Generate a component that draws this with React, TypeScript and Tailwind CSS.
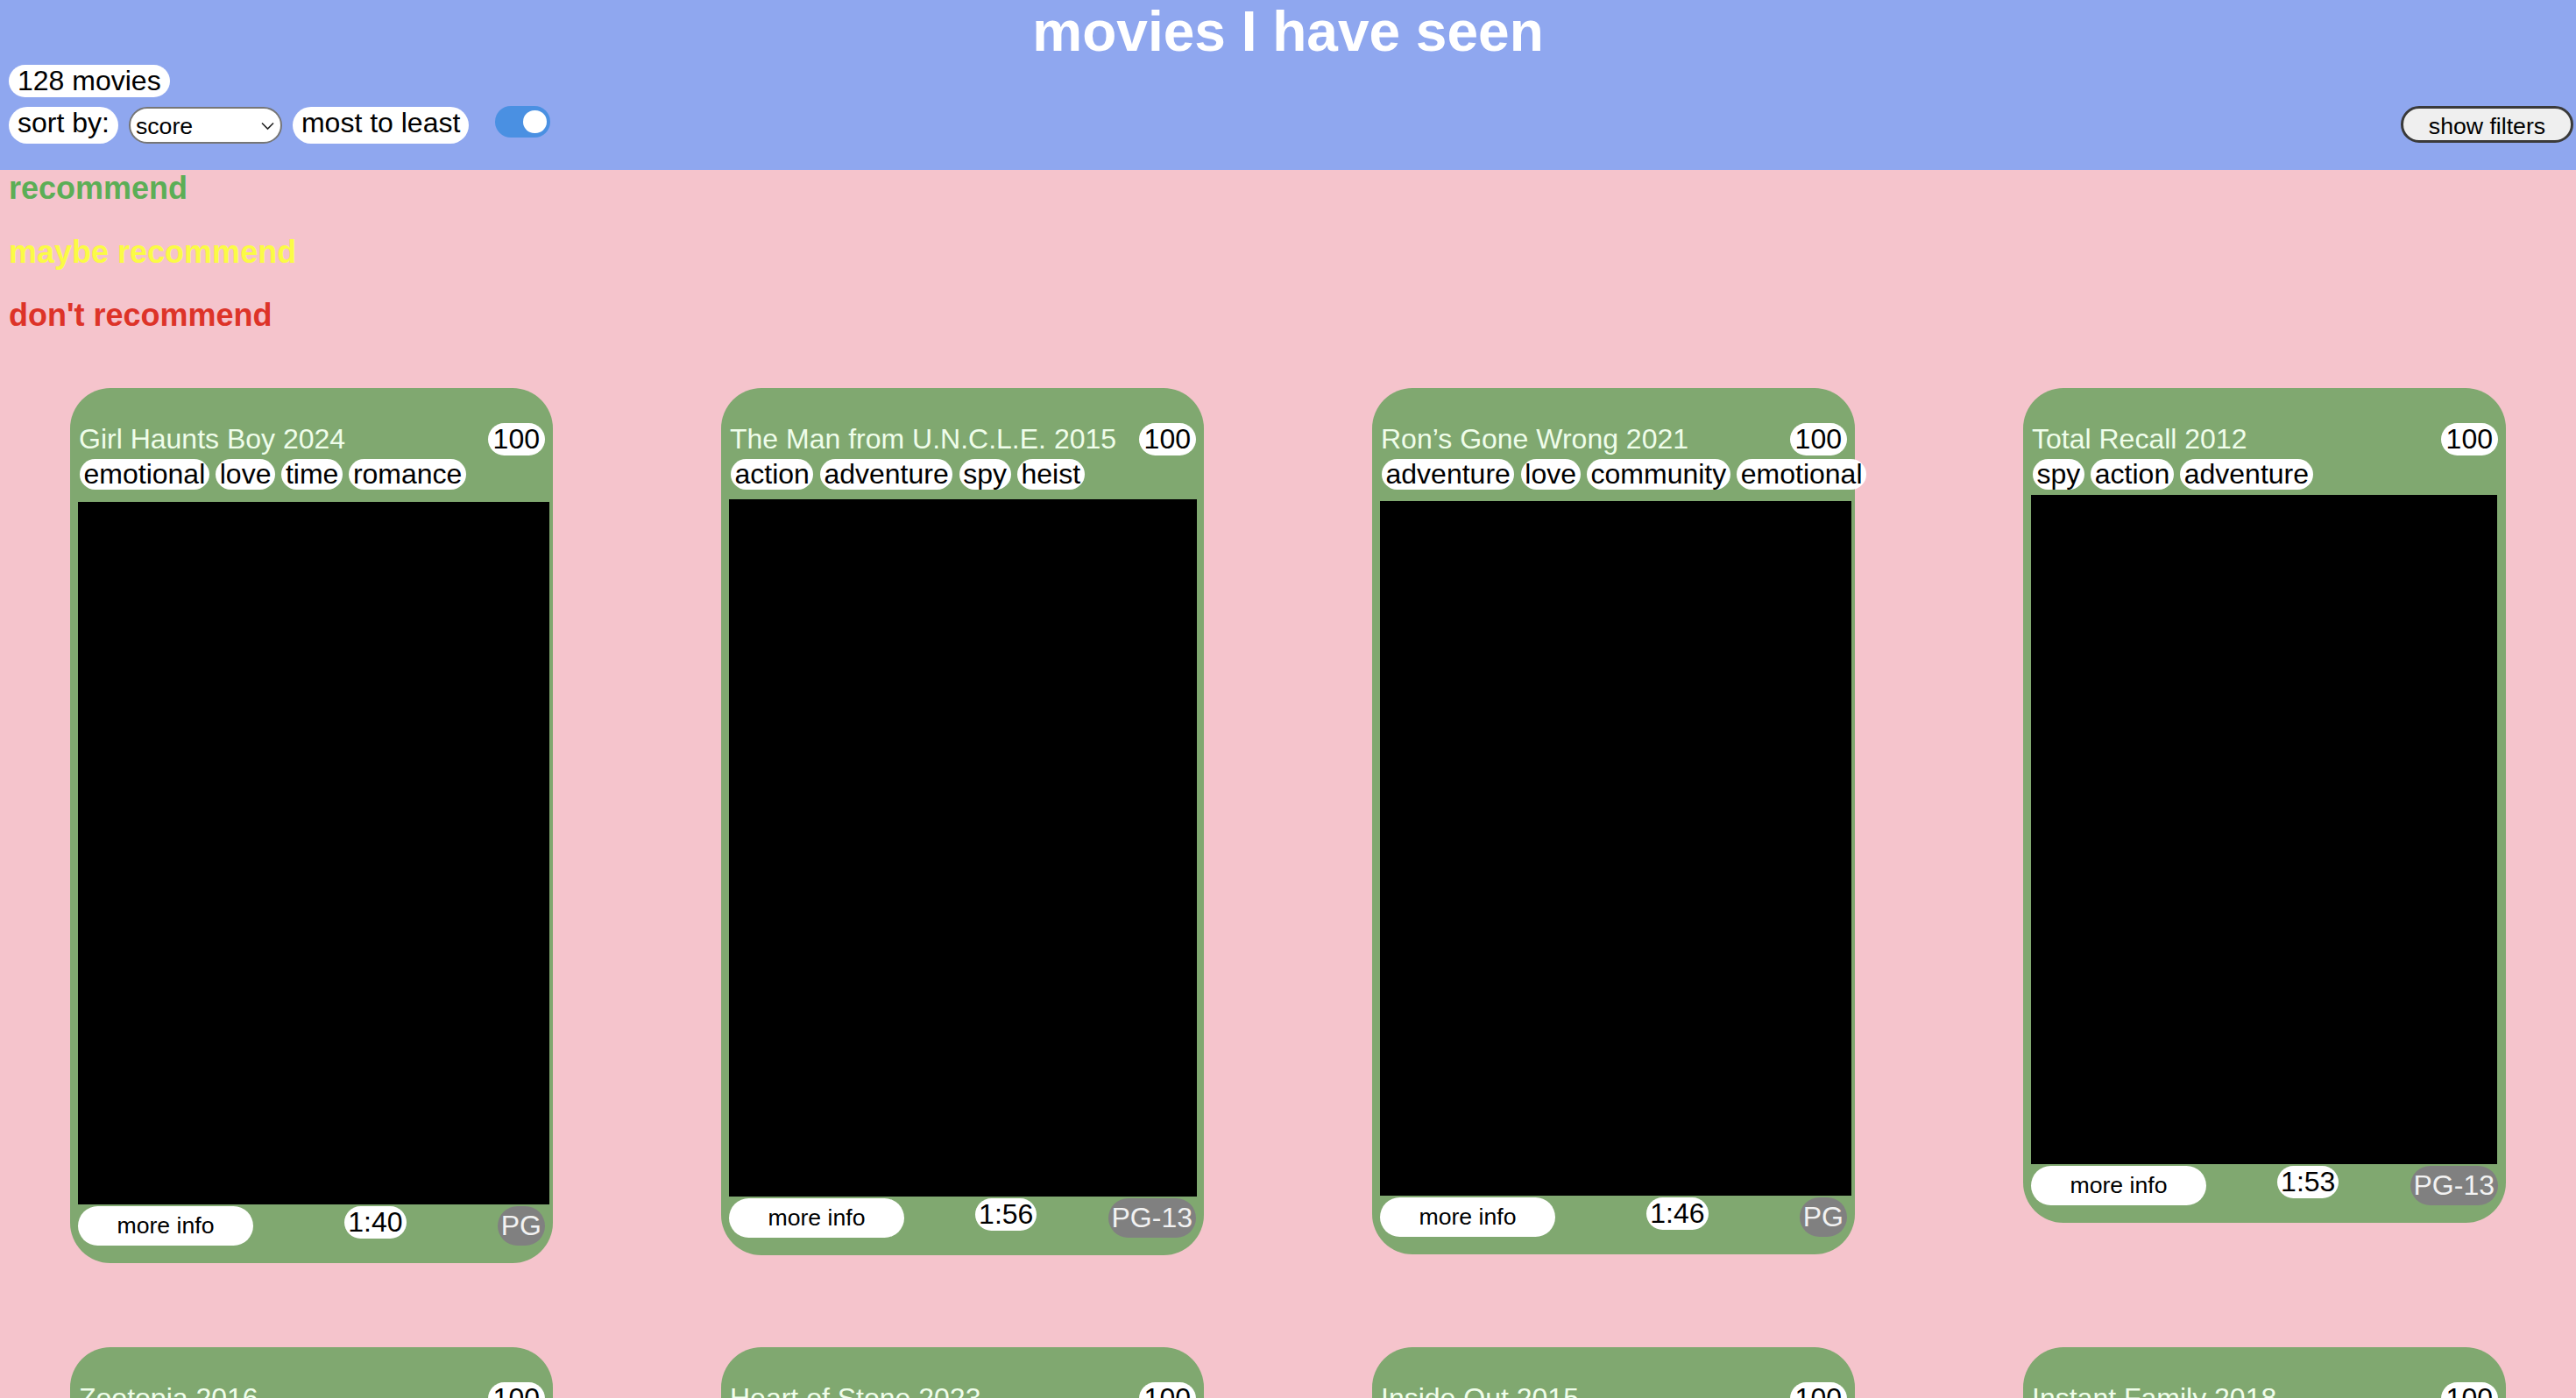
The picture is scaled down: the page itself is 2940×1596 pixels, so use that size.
import React from "react";

type Movie = {
  title: string;
  score: number;
  tags: string[];
  length: string;
  rating: string;
  poster: { w: number; h: number; top: number };
};

const movies: Movie[] = [
  { title: "Girl Haunts Boy 2024", score: 100, tags: ["emotional", "love", "time", "romance"], length: "1:40", rating: "PG", poster: { w: 538, h: 802, top: 14 } },
  { title: "The Man from U.N.C.L.E. 2015", score: 100, tags: ["action", "adventure", "spy", "heist"], length: "1:56", rating: "PG-13", poster: { w: 534, h: 796, top: 11 } },
  { title: "Ron\u2019s Gone Wrong 2021", score: 100, tags: ["adventure", "love", "community", "emotional"], length: "1:46", rating: "PG", poster: { w: 538, h: 793, top: 13 } },
  { title: "Total Recall 2012", score: 100, tags: ["spy", "action", "adventure"], length: "1:53", rating: "PG-13", poster: { w: 532, h: 764, top: 6 } },
  { title: "Zootopia 2016", score: 100, tags: ["animals", "mystery", "comedy"], length: "1:48", rating: "PG", poster: { w: 538, h: 800, top: 13 } },
  { title: "Heart of Stone 2023", score: 100, tags: ["action", "spy", "heist"], length: "2:05", rating: "PG-13", poster: { w: 536, h: 800, top: 13 } },
  { title: "Inside Out 2015", score: 100, tags: ["emotional", "family", "growing"], length: "1:35", rating: "PG", poster: { w: 538, h: 800, top: 13 } },
  { title: "Instant Family 2018", score: 100, tags: ["family", "comedy", "emotional"], length: "1:58", rating: "PG-13", poster: { w: 534, h: 800, top: 13 } },
];

function MovieCard({ movie }: { movie: Movie }) {
  return (
    <div className="w-[551px] rounded-[46px] bg-[#80a870] pt-[40px] pr-[9px] pb-[20px] pl-[9px]">
      <div className="flex items-start justify-between">
        <span className="pl-[1px] text-[32px] leading-[37px] text-[#effdea]">{movie.title}</span>
        <span className="rounded-full bg-white px-[6px] text-[32px] leading-[37px] text-black">{movie.score}</span>
      </div>
      <div className="mt-[4px] flex gap-[7.5px] whitespace-nowrap pl-[2px]">
        {movie.tags.map((tag) => (
          <span key={tag} className="rounded-full bg-white px-[4.5px] text-[32px] leading-[35px] text-black">
            {tag}
          </span>
        ))}
      </div>
      <div
        className="bg-black"
        style={{ width: movie.poster.w, height: movie.poster.h, marginTop: movie.poster.top }}
      />
      <div className="mt-[2px] flex items-start justify-between">
        <button className="h-[45px] w-[200px] rounded-full bg-white text-[26.67px] text-black">more info</button>
        <span className="rounded-full bg-white px-[4px] text-[32px] leading-[37px] text-black">{movie.length}</span>
        <span className="rounded-full bg-[#808080] px-[4px] text-[32px] leading-[45px] text-[#f2f2f2]">{movie.rating}</span>
      </div>
    </div>
  );
}

export default function App() {
  return (
    <div className="min-h-screen bg-[#f5c4cc] font-['Liberation_Sans',Arial,sans-serif]">
      <header className="bg-[#8fa7ef] pb-[30px]">
        <h1 className="text-center text-[64px] font-bold leading-[73px] text-white">movies I have seen</h1>
        <div className="mt-[1px] pl-[10px]">
          <span className="inline-block rounded-full bg-white px-[10px] text-[32px] leading-[37px] text-black">128 movies</span>
        </div>
        <div className="mt-[11px] flex items-start justify-between pr-[3px] pl-[10px]">
          <div className="flex items-start gap-[12px]">
            <span className="h-[42px] rounded-full bg-white px-[10px] pb-[5px] text-[32px] leading-[37px] text-black">sort by:</span>
            <div className="relative">
              <select className="h-[42px] w-[175px] appearance-none rounded-full border-2 border-[#767676] bg-white pl-[6px] text-[26.67px] text-black outline-none">
                <option>score</option>
                <option>title</option>
                <option>year</option>
                <option>length</option>
              </select>
              <svg className="pointer-events-none absolute top-[17px] right-[9px]" width="15" height="10" viewBox="0 0 15 10" fill="none">
                <path d="M1 1.5 L7.5 8 L14 1.5" stroke="#222" strokeWidth="1.6" />
              </svg>
            </div>
            <span className="h-[42px] rounded-full bg-white px-[10px] pb-[5px] text-[32px] leading-[37px] text-black">most to least</span>
            <div className="ml-[18px] -mt-[1px] flex h-[36px] w-[63px] items-center justify-end rounded-full bg-[#4a90e2] pr-[4px]">
              <div className="h-[26px] w-[27px] rounded-full bg-white" />
            </div>
          </div>
          <button className="-mt-[1px] h-[42px] w-[197px] rounded-full border-[3px] border-[#3a3a3a] bg-[#efefef] text-[26.67px] text-black">
            show filters
          </button>
        </div>
      </header>

      <div className="flex flex-col gap-[31px] pl-[10px] text-[36px] leading-[41.5px] font-bold">
        <p className="text-[#5cae56]">recommend</p>
        <p className="text-[#fbfb46]">maybe recommend</p>
        <p className="text-[#dd3328]">don't recommend</p>
      </div>

      <div className="mt-[62px] grid grid-cols-[repeat(4,551px)] items-start gap-x-[192px] gap-y-[96px] pb-[100px] pl-[80px]">
        {movies.map((m) => (
          <MovieCard key={m.title} movie={m} />
        ))}
      </div>
    </div>
  );
}
